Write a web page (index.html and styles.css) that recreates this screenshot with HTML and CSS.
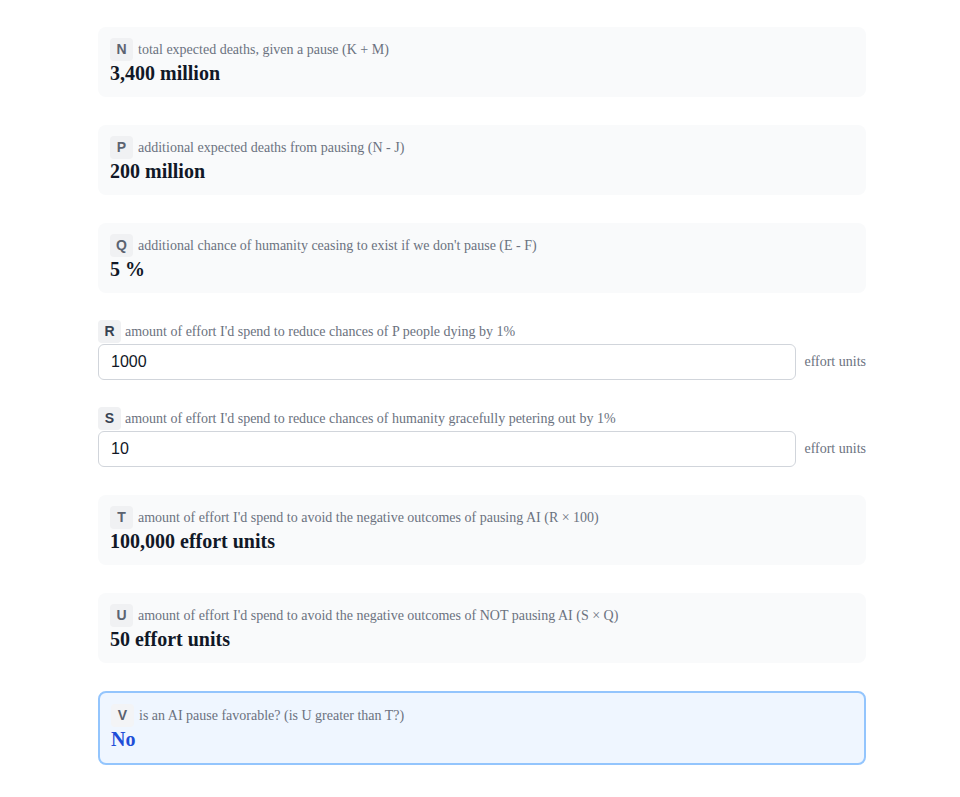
FILE: index.html
```html
<!DOCTYPE html>
<html>
<head>
<meta charset="utf-8">
<link rel="stylesheet" href="styles.css">
</head>
<body>
<main class="list">
  <div class="card">
    <div class="label"><span class="badge">N</span><span class="desc">total expected deaths, given a pause (K + M)</span></div>
    <div class="value">3,400 million</div>
  </div>
  <div class="card">
    <div class="label"><span class="badge">P</span><span class="desc">additional expected deaths from pausing (N - J)</span></div>
    <div class="value">200 million</div>
  </div>
  <div class="card">
    <div class="label"><span class="badge">Q</span><span class="desc">additional chance of humanity ceasing to exist if we don't pause (E - F)</span></div>
    <div class="value">5 %</div>
  </div>
  <div class="field">
    <div class="label"><span class="badge">R</span><span class="desc">amount of effort I'd spend to reduce chances of P people dying by 1%</span></div>
    <div class="input-row"><input class="input" type="text" value="1000"><span class="unit">effort units</span></div>
  </div>
  <div class="field">
    <div class="label"><span class="badge">S</span><span class="desc">amount of effort I'd spend to reduce chances of humanity gracefully petering out by 1%</span></div>
    <div class="input-row"><input class="input" type="text" value="10"><span class="unit">effort units</span></div>
  </div>
  <div class="card">
    <div class="label"><span class="badge">T</span><span class="desc">amount of effort I'd spend to avoid the negative outcomes of pausing AI (R × 100)</span></div>
    <div class="value">100,000 effort units</div>
  </div>
  <div class="card">
    <div class="label"><span class="badge">U</span><span class="desc">amount of effort I'd spend to avoid the negative outcomes of NOT pausing AI (S × Q)</span></div>
    <div class="value">50 effort units</div>
  </div>
  <div class="card result">
    <div class="label"><span class="badge">V</span><span class="desc">is an AI pause favorable? (is U greater than T?)</span></div>
    <div class="value">No</div>
  </div>
</main>
</body>
</html>
```

FILE: styles.css
```css
html, body {
  margin: 0;
  padding: 0;
  background: #ffffff;
}

body {
  font-family: "Liberation Serif", "Times New Roman", serif;
}

.list {
  width: 768px;
  margin-left: 98px;
  padding-top: 27px;
  display: flex;
  flex-direction: column;
  gap: 28px;
}

.card {
  background: #f9fafb;
  border-radius: 8px;
  padding: 10px 12px 12px;
  height: 70px;
  box-sizing: border-box;
}

.card.result {
  background: #eff6ff;
  border: 2px solid #93c5fd;
  height: 74px;
  padding: 10px 11px 12px;
}

.label {
  display: flex;
  align-items: center;
  height: 24px;
}

.badge {
  display: inline-flex;
  align-items: center;
  justify-content: center;
  width: 23px;
  height: 23px;
  border-radius: 4px;
  background: #f0f1f3;
  color: #5b6370;
  font-family: "Liberation Sans", Arial, sans-serif;
  font-weight: bold;
  font-size: 14px;
  margin-right: 5px;
  flex: none;
}

.result .badge {
  background: #f3f4f6;
}

.field .badge {
  margin-right: 4px;
  color: #374151;
}

.desc {
  font-size: 14px;
  color: #6b7280;
  padding-top: 2px;
}

.value {
  font-size: 20px;
  font-weight: bold;
  color: #111827;
  line-height: 24px;
}

.result .value {
  color: #1d4ed8;
}

.field {
  margin-top: -2px;
}

.input-row {
  display: flex;
  align-items: center;
  margin-top: 1px;
}

.input {
  flex: 1;
  height: 36px;
  box-sizing: border-box;
  border: 1px solid #d1d5db;
  border-radius: 6px;
  padding: 0 12px;
  font-family: "Liberation Sans", Arial, sans-serif;
  font-size: 16px;
  color: #111827;
  background: #fff;
  outline: none;
}

.unit {
  margin-left: 8px;
  font-size: 14px;
  color: #6b7280;
  white-space: nowrap;
}
```
